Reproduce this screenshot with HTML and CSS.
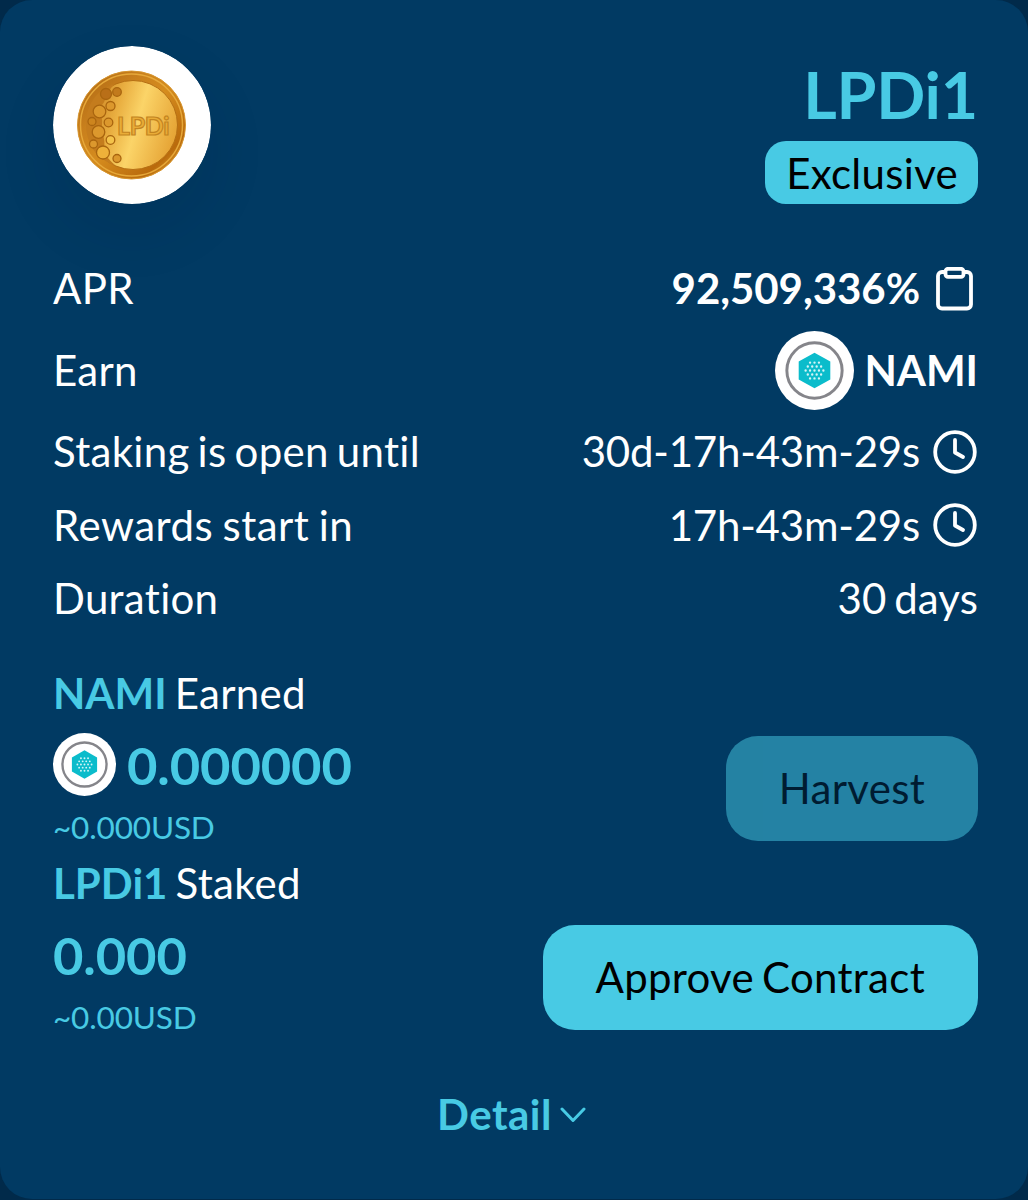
FILE: index.html
```html
<!doctype html>
<html lang="en">
    <head>
        <meta charset="utf-8" />
        <title>LPDi1 Pool</title>
        <link rel="stylesheet" href="styles.css">
    </head>

    <body>
        <!-- shared icons -->
        <svg class="defs" width="0" height="0">
            <symbol id="clock" viewBox="0 0 44 44">
                <circle cx="22.500" cy="22" r="19.800" />
                <path d="M22.500 10v12.500l8 4.500" />
            </symbol>
            <symbol id="nami" viewBox="0 0 80 80">
                <circle cx="40" cy="40" r="40" fill="#fff" />
                <circle cx="40" cy="40" r="28" fill="none" stroke="#85858a" stroke-width="3" />
                <path d="M40 22l16 9v18l-16 9-16-9V31z" fill="#0bbccb" />
                <g fill="none" stroke="#d4f5f7" stroke-width="2.4" stroke-linecap="round" stroke-dasharray="0 4.5">
                    <path d="M35.500 32h9.200M33.200 36h13.700M31 40h18.200M33.200 44h13.700M35.500 48h9.200" />
                </g>
            </symbol>
        </svg>

        <div class="card">
            <div class="header">
                <svg class="coin" viewBox="0 0 158 158">
                    <defs>
                        <linearGradient id="rim" x1="0" y1="0" x2="1" y2="1">
                            <stop offset="0" stop-color="#a96312" />
                            <stop offset=".3" stop-color="#c9801d" />
                            <stop offset=".5" stop-color="#d58c1e" />
                            <stop offset=".8" stop-color="#b96a0c" />
                            <stop offset="1" stop-color="#f1bd45" />
                        </linearGradient>
                        <linearGradient id="face" x1="0" y1=".3" x2="1" y2=".6">
                            <stop offset="0" stop-color="#c98322" />
                            <stop offset=".3" stop-color="#e9ae40" />
                            <stop offset=".55" stop-color="#fbd468" />
                            <stop offset="1" stop-color="#e5a233" />
                        </linearGradient>
                    </defs>
                    <circle cx="79" cy="79" r="79" fill="#fff" />
                    <circle cx="78.5" cy="79" r="54" fill="url(#rim)" stroke="#d6952e" />
                    <circle cx="78.5" cy="79" r="51" fill="none" stroke="#e6a83a" stroke-width="1.5" />
                    <circle cx="80" cy="79" r="44.5" fill="url(#face)" stroke="#b56f14" />
                    <path d="M62 38c-18 5-29 21-29 40 0 20 11 36 29 41-8-7-12-12-11-18 2-8-3-13-2-23 1-9-4-12 0-19 5-6 4-14 13-21z" fill="#c47c1d" />
                    <g fill="#dc982d" stroke="#a9650f" stroke-width="1.3">
                        <circle cx="53" cy="48" r="5.5" fill="#b96f18" />
                        <circle cx="64" cy="46" r="4.3" fill="#c27a1c" />
                        <circle cx="57.500" cy="60" r="4.500" />
                        <circle cx="46.500" cy="65.500" r="6.300" />
                        <circle cx="39" cy="75.500" r="4" fill="#cd851e" />
                        <circle cx="55.500" cy="76.500" r="4.300" />
                        <circle cx="45.500" cy="86" r="6.300" />
                        <circle cx="57.500" cy="94" r="4.300" fill="#f4c34b" />
                        <circle cx="40.500" cy="98" r="4" />
                        <circle cx="50" cy="106.500" r="6.500" fill="#eeb13a" />
                        <circle cx="64" cy="112.500" r="4" />
                    </g>
                    <text class="coin-text" x="64" y="88.500" textLength="53">LPDi</text>
                </svg>
                <div class="heading">
                    <div class="title">LPDi1</div>
                    <div class="badge">Exclusive</div>
                </div>
            </div>

            <div class="info">
                <div class="row">
                    <span>APR</span>
                    <span class="value">
                        <b>92,509,336%</b>
                        <svg class="icon" viewBox="0 0 44 44">
                            <path d="M12.500 5H9.500a4 4 0 0 0-4 4v28.500a4 4 0 0 0 4 4h25a4 4 0 0 0 4-4V9a4 4 0 0 0-4-4h-3" />
                            <rect x="13" y="1.800" width="18" height="8" rx="2.500" />
                        </svg>
                    </span>
                </div>
                <div class="row">
                    <span>Earn</span>
                    <span class="value">
                        <svg class="token"><use href="#nami" /></svg>
                        <b>NAMI</b>
                    </span>
                </div>
                <div class="row">
                    <span>Staking is open until</span>
                    <span class="value">30d-17h-43m-29s <svg class="icon"><use href="#clock" /></svg></span>
                </div>
                <div class="row">
                    <span class="wide">Rewards start in</span>
                    <span class="value">17h-43m-29s <svg class="icon"><use href="#clock" /></svg></span>
                </div>
                <div class="row">
                    <span>Duration</span>
                    <span class="value days">30 days</span>
                </div>
            </div>

            <div class="stake">
                <div>
                    <div class="label"><b>NAMI</b> Earned</div>
                    <div class="amount">
                        <svg class="token-small"><use href="#nami" /></svg>
                        0.000000
                    </div>
                    <div class="usd">~0.000USD</div>
                </div>
                <button class="disabled" disabled>Harvest</button>
            </div>
            <div class="stake">
                <div>
                    <div class="label"><b>LPDi1</b> Staked</div>
                    <div class="amount">0.000</div>
                    <div class="usd">~0.00USD</div>
                </div>
                <button>Approve Contract</button>
            </div>

            <div class="detail">
                Detail
                <svg class="chevron" viewBox="0 0 26 16"><path d="M2 2l11 11.500L24 2" /></svg>
            </div>
        </div>
    </body>
</html>
```

FILE: styles.css
```css
* {
    box-sizing: border-box;
}
body {
    margin: 0;
    background-color: #012a4a;
    font-family: Lato, sans-serif;
    font-size: 42px;
    line-height: 63px;
    letter-spacing: 0.3px;
    word-spacing: -3px;
    color: white;
}
.defs {
    display: block;
}
.card {
    height: 1199px;
    padding: 46px 50px 0 53px;
    background-color: #013a63;
    border-radius: 32px;
    overflow: hidden;
}
.header {
    display: flex;
    justify-content: space-between;
    height: 158px;
}
.coin {
    width: 158px;
    height: 158px;
    border-radius: 50%;
    box-shadow: 0 26px 60px rgba(0, 20, 50, 0.1);
}
.coin-text {
    font-size: 25px;
    font-weight: bold;
    fill: #e9ac38;
    stroke: #c38420;
    stroke-width: 1.2px;
}
.heading {
    display: flex;
    flex-direction: column;
    align-items: flex-end;
}
.title {
    height: 95px;
    font-size: 64.500px;
    line-height: 97px;
    letter-spacing: -0.2px;
    font-weight: bold;
    color: #48cae4;
}
.badge {
    height: 63px;
    padding: 0 20px 0 21px;
    border-radius: 21px;
    background-color: #48cae4;
    color: black;
    line-height: 64px;
}
.info {
    display: flex;
    flex-direction: column;
    gap: 10.6px;
    margin: 53px 0 32px;
}
.row,
.value {
    display: flex;
    align-items: center;
}
.row {
    justify-content: space-between;
}
.value {
    gap: 11px;
    letter-spacing: -0.2px;
}
.value b {
    letter-spacing: -0.05px;
}
.days {
    letter-spacing: 0.1px;
}
.wide {
    letter-spacing: 0.500px;
    word-spacing: -2px;
}
.icon {
    width: 47px;
    height: 44px;
    fill: none;
    stroke: white;
    stroke-width: 3.8px;
    stroke-linecap: round;
    stroke-linejoin: round;
}
.token {
    width: 79px;
    height: 79px;
}
.token-small {
    width: 63px;
    height: 63px;
}
.stake {
    display: flex;
    justify-content: space-between;
    align-items: flex-start;
    height: 189.500px;
}
.label b {
    letter-spacing: 0;
}
.label b,
.amount,
.usd,
.detail {
    color: #48cae4;
}
.amount {
    display: flex;
    align-items: center;
    gap: 11px;
    height: 79px;
    font-size: 52.500px;
    line-height: 61px;
    letter-spacing: -0.1px;
    font-weight: bold;
}
.usd {
    height: 47px;
    font-size: 31.500px;
    line-height: 47px;
    letter-spacing: -0.15px;
}
button {
    height: 105px;
    margin-top: 73.600px;
    padding: 0 53px;
    border: none;
    border-radius: 32px;
    background-color: #48cae4;
    color: black;
    font: inherit;
    letter-spacing: inherit;
    word-spacing: inherit;
}
.disabled {
    opacity: 0.5;
}
.detail {
    display: flex;
    justify-content: center;
    align-items: center;
    gap: 8px;
    margin-top: 42px;
    padding-right: 8px;
    letter-spacing: 0.5px;
    font-weight: bold;
}
.chevron {
    width: 26px;
    height: 16px;
    fill: none;
    stroke: #48cae4;
    stroke-width: 3px;
    stroke-linecap: round;
    stroke-linejoin: round;
}
```
